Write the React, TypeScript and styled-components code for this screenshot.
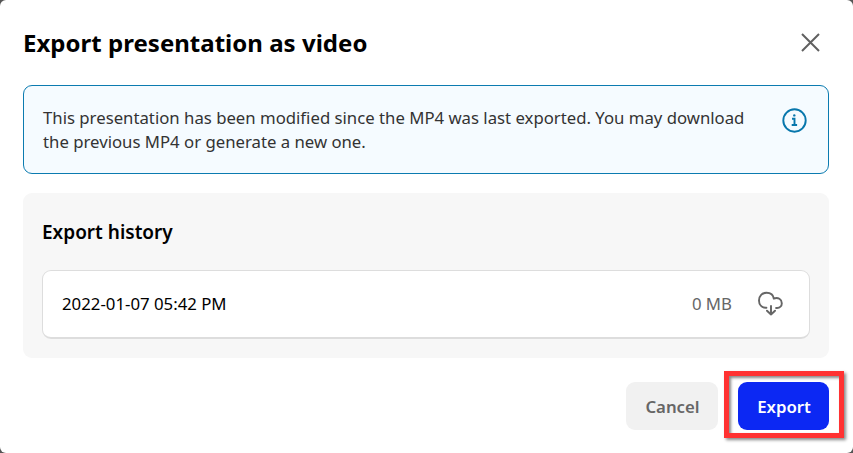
import React from "react";
import styled, { createGlobalStyle } from "styled-components";

const Global = createGlobalStyle`
  *,*::after{box-sizing:border-box}
  body{margin:0;background:#555;font-family:"Noto Sans",sans-serif;overflow:hidden}
  h1,h2,p{margin:0}
  button{font:inherit;border:0;background:none;padding:0}
`;
const Dialog = styled.main`
  width:853px;height:453px;background:#fff;border-radius:6px;padding:20px 24px 0 23px;
`;
const Header = styled.header`
  height:65px;display:flex;justify-content:space-between;align-items:flex-start;
`;
const Title = styled.h1`font-size:24px;line-height:46px;font-weight:700;color:#000;letter-spacing:.02px;`;
const Close = styled.button`display:flex;padding:13px 9px 0 0;`;
const Notice = styled.section`
  height:89px;border:1px solid #0b7bb0;border-radius:9px;background:#f5fbff;
  display:flex;justify-content:space-between;padding:20px 21px 0 19px;
  p{font-size:16.74px;line-height:24px;color:#333;white-space:nowrap}
  svg{margin-top:2px}
`;
const History = styled.section`
  margin-top:19px;height:165px;border-radius:9px;background:#f7f7f7;padding:25px 19px 0;
  h2{font-size:19px;line-height:28px;font-weight:600;color:#000}
`;
const Row = styled.div`
  margin-top:24px;height:69px;border:1px solid #ddd;border-bottom-width:2px;border-radius:9px;background:#fff;
  display:flex;align-items:center;padding:0 26px 0 19px;font-size:16.8px;color:#000;
  span{padding-bottom:2px}
`;
const Size = styled.span`margin-left:auto;margin-right:25px;color:#666;`;
const Footer = styled.footer`display:flex;justify-content:flex-end;gap:20px;padding-top:24px;`;
const Action = styled.button<{$primary?:boolean}>`
  width:${p=>p.$primary?91:92}px;height:48px;border-radius:9px;font-size:16.8px;font-weight:600;padding:1px 0 0 1px;
  background:${p=>p.$primary?"#0c28f3":"#f1f1f1"};color:${p=>p.$primary?"#fff":"#666"};
`;
const Highlight = styled.div`
  position:relative;
  &::after{content:"";position:absolute;left:-14px;top:-11px;width:120px;height:67px;border:5px solid #ff3232;box-shadow:2px 2px 3px #0007,inset 2px 2px 3px #0007;pointer-events:none}
`;
export default function App(){
  return <><Global/><Dialog>
    <Header><Title>Export presentation as video</Title><Close aria-label="Close"><svg width="19" height="19" viewBox="0 0 19 19" stroke="#606060" strokeWidth="2"><path d="m1 1 17 17M18 1 1 18"/></svg></Close></Header>
    <Notice><p>This presentation has been modified since the MP4 was last exported. You may download<br/>the previous MP4 or generate a new one.</p>
      <svg width="25" height="25" viewBox="0 0 25 25" fill="none" stroke="#0877ac" strokeWidth="1.9"><circle cx="12.5" cy="12.5" r="11.2"/><path d="M10 10.8h2.5V17M9.7 17h5.4"/><circle cx="12.3" cy="7.4" r="1.2" fill="#0877ac" stroke="none"/></svg></Notice>
    <History><h2>Export history</h2><Row><span>2022-01-07 05:42 PM</span><Size>0 MB</Size>
      <svg width="26" height="26" viewBox="0 0 26 26" fill="none" stroke="#666" strokeWidth="1.95" strokeLinecap="round" strokeLinejoin="round"><path d="M9.4 16.8H8.7C4.8 16.5 2 13.4 2 9.4 2 5 5.3 1.7 9.5 1.7c3.8 0 6.8 2.2 7.3 5.8 4.3-1.6 8 .8 8 4.7 0 2.8-2 4.7-4.7 4.7h-1M14 15v8.5m-4-3.8 4 3.8 4-3.8"/></svg></Row></History>
    <Footer><Action>Cancel</Action><Highlight><Action $primary>Export</Action></Highlight></Footer>
  </Dialog></>;
}
